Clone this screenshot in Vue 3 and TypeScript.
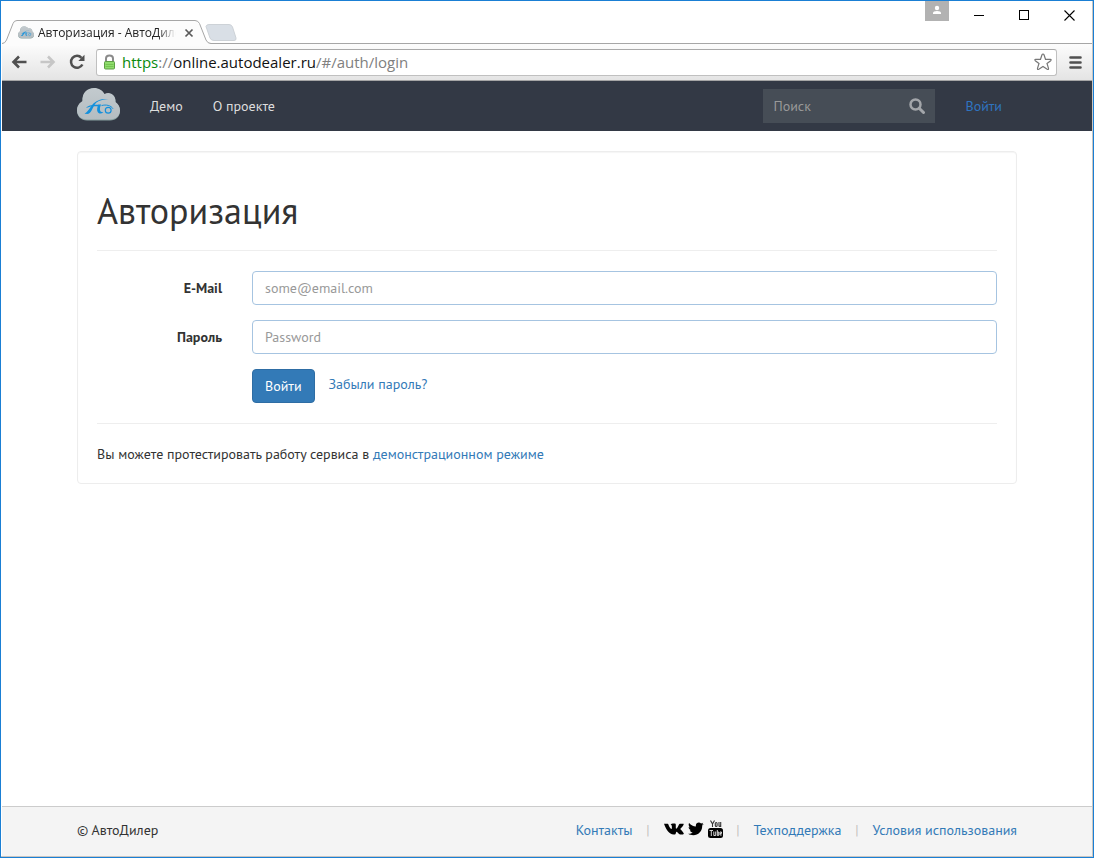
<script setup lang="ts">
import { ref } from 'vue'

interface NavLink {
  label: string
  href: string
}

const navLinks: NavLink[] = [
  { label: 'Демо', href: '#/demo' },
  { label: 'О проекте', href: '#/about' },
]

const query = ref('')
const email = ref('')
const password = ref('')
</script>

<template>
  <div class="window">
    <svg class="symbols" width="0" height="0" aria-hidden="true">
      <defs>
        <linearGradient id="cloud-fill" x1="0" y1="0" x2="0" y2="1">
          <stop offset="0" stop-color="#c3cace" />
          <stop offset="1" stop-color="#b4bdc1" />
        </linearGradient>
        <symbol id="cloud" viewBox="0 0 43 33">
          <path d="M10 32.500C4 32.500 0 28 0 23C0 18 3 15 5.500 13.500C5 5.500 10 .5 17 .5C22 .5 25.500 3 27.500 6.500C33 3.500 39 7.500 38.500 14.500C41.500 16.500 43 19.500 43 23C43 28.500 39 32.500 33 32.500Z" fill="#87a09f" />
          <path d="M10 31.500C4 31.500 0 27.500 0 22.500C0 17.500 3 14.500 5.500 13C5 5 10 0 17 0C22 0 25.500 2.500 27.500 6C33 3 39 7 38.500 14C41.500 16 43 19 43 22.500C43 27.500 39 31.500 33 31.500Z" fill="url(#cloud-fill)" />
          <path d="M7.500 25.800C11 24 12.500 20 15.500 16.500C19 12.500 24 10.500 31.500 11C25 11.500 21 12.800 18.500 15.500C15.500 19 15 24.500 11 26Z" fill="#1390dc" />
          <path d="M9 20C11 17.300 15 16.600 22 16.800L21 18.300C16 18.200 12.500 18.500 9 20Z" fill="#1390dc" />
          <path d="M21.500 16.500C20 19 19.600 22.500 20.800 24.300C22 26 24.500 25.800 26.500 24.300C23.800 24.400 22.800 23 22.900 21C23 19 23.500 17.500 24.300 16.500Z" fill="#1390dc" />
          <path d="M24.500 17.600C29 16.300 34 17.300 36 20.800" fill="none" stroke="#1390dc" />
          <circle cx="31.200" cy="22.300" r="2.900" fill="none" stroke="#1390dc" stroke-width="1.200" />
        </symbol>
      </defs>
    </svg>

    <header class="browser">
      <div class="titlebar">
        <div class="tab">
          <svg class="tab-shape" width="238" height="26" viewBox="0 0 238 26" aria-hidden="true">
            <path d="M204 6.500Q204.500 4.500 207 4.500H227Q229.500 4.500 230.500 7L234 18Q234.500 20.500 232 20.500H212Q209 20.500 208 18Z" fill="#d9dfe6" stroke="#cdd2d7" />
            <path d="M0 25V23.500Q3 23.500 4.500 20L11 3.500Q12 .5 15 .5H193Q196 .5 197.500 3.500L204 20Q205.500 23.500 209 23.500H238V26H0Z" fill="#fcfcfc" />
            <path d="M0 23.500Q3 23.500 4.500 20L11 3.500Q12 .5 15 .5H193Q196 .5 197.500 3.500L204 20Q205.500 23.500 209 23.500H238" fill="none" stroke="#a6a6a6" />
          </svg>
          <svg class="favicon" width="16" height="13" aria-hidden="true"><use href="#cloud" /></svg>
          <span class="tab-title">Авторизация - АвтоДилер</span>
          <button class="plain tab-close" type="button" aria-label="Закрыть вкладку">
            <svg width="10" height="10" viewBox="0 0 10 10"><path d="M1.500 1.500L8.500 8.500M8.500 1.500L1.500 8.500" stroke="#5a5a5a" stroke-width="1.700" /></svg>
          </button>
        </div>
        <div class="controls">
          <button class="plain profile" type="button" aria-label="Профиль">
            <svg width="24" height="20" viewBox="0 0 24 20"><circle cx="12" cy="7" r="2.200" fill="#fff" /><path d="M8 13V12Q8 10 12 10T16 12V13Z" fill="#fff" /></svg>
          </button>
          <button class="plain control" type="button" aria-label="Свернуть">
            <svg width="11" height="11" viewBox="0 0 11 11"><path d="M0 5.500H10" stroke="#000" /></svg>
          </button>
          <button class="plain control" type="button" aria-label="Развернуть">
            <svg width="11" height="11" viewBox="0 0 11 11"><rect x=".5" y=".5" width="9" height="9" fill="none" stroke="#000" /></svg>
          </button>
          <button class="plain control" type="button" aria-label="Закрыть">
            <svg width="11" height="11" viewBox="0 0 11 11"><path d="M.5 .5L10.500 10.500M10.500 .5L.5 10.500" stroke="#000" stroke-width="1.100" /></svg>
          </button>
        </div>
      </div>
      <div class="toolbar">
        <button class="plain tool" type="button" aria-label="Назад">
          <svg width="16" height="14" viewBox="0 0 16 14"><path d="M8 1.500L2.500 7L8 12.500M3 7H15.500" fill="none" stroke="#505050" stroke-width="2.600" /></svg>
        </button>
        <button class="plain tool" type="button" aria-label="Вперёд">
          <svg width="16" height="14" viewBox="0 0 16 14"><path d="M8 1.500L13.500 7L8 12.500M13 7H.5" fill="none" stroke="#c6c6c6" stroke-width="2.600" /></svg>
        </button>
        <button class="plain tool" type="button" aria-label="Обновить">
          <svg width="16" height="16" viewBox="0 0 16 16"><path d="M12.500 3.800A6 6 0 1 0 13.400 10.500" fill="none" stroke="#505050" stroke-width="2.500" /><path d="M15.500 .8V7H9.300Z" fill="#505050" /></svg>
        </button>
        <div class="address">
          <svg width="13" height="16" viewBox="0 0 13 16" aria-hidden="true">
            <path d="M3 8V4.500Q3 1.500 6.500 1.500T10 4.500V8" fill="none" stroke="#8b8b8b" stroke-width="2" />
            <rect x="1.500" y="7.500" width="10" height="7.500" rx="1" fill="#8fdc6c" stroke="#5d9e45" />
            <path d="M2.500 10.500H10.500M2.500 12.500H10.500" stroke="#74c451" />
          </svg>
          <span class="url"><span class="scheme">https</span>://<span class="host">online.autodealer.ru</span>/#/auth/login</span>
          <button class="plain star" type="button" aria-label="Добавить в закладки">
            <svg width="18" height="18" viewBox="0 0 18 18"><path d="M9 1Q9.700 1 10 1.800L11.500 6.300H16.300Q17.800 6.500 16.700 7.700L13 10.500L14.500 15.300Q14.700 17 13.200 16.300L9 13.400L4.800 16.300Q3.300 17 3.500 15.300L5 10.500L1.300 7.700Q.2 6.500 1.700 6.300H6.500L8 1.800Q8.300 1 9 1Z" fill="#fff" stroke="#777" stroke-width="1.200" /></svg>
          </button>
        </div>
        <button class="plain menu" type="button" aria-label="Меню">
          <svg width="13" height="13" viewBox="0 0 13 13"><path d="M1.500 1.500H11.500M1.500 6.500H11.500M1.500 11.500H11.500" stroke="#505050" stroke-width="2.600" stroke-linecap="round" /></svg>
        </button>
      </div>
    </header>

    <nav class="navbar">
      <div class="container bar">
        <a class="brand" href="#/" aria-label="АвтоДилер"><svg width="43" height="33"><use href="#cloud" /></svg></a>
        <a v-for="link in navLinks" :key="link.href" class="nav-link" :href="link.href">{{ link.label }}</a>
        <form class="search" @submit.prevent>
          <input v-model="query" type="text" placeholder="Поиск" aria-label="Поиск" />
          <button class="plain" type="submit" aria-label="Найти">
            <svg width="16" height="16" viewBox="0 0 16 16"><circle cx="6.500" cy="6.500" r="5" fill="none" stroke="#a3a6aa" stroke-width="2.500" /><path d="M10.200 10.200L14.500 14.500" stroke="#a3a6aa" stroke-width="3" stroke-linecap="round" /></svg>
          </button>
        </form>
        <a class="sign-in" href="#/auth/login">Войти</a>
      </div>
    </nav>

    <main class="container">
      <section class="card">
        <h1>Авторизация</h1>
        <hr />
        <form class="login" @submit.prevent>
          <label for="email">E-Mail</label>
          <input id="email" v-model="email" type="email" placeholder="some@email.com" />
          <label for="password">Пароль</label>
          <input id="password" v-model="password" type="password" placeholder="Password" />
          <div class="actions">
            <button type="submit">Войти</button>
            <a href="#/auth/restore">Забыли пароль?</a>
          </div>
        </form>
        <hr />
        <p>Вы можете протестировать работу сервиса в <a href="#/demo">демонстрационном режиме</a></p>
      </section>
    </main>

    <footer class="footer">
      <div class="container bar">
        <span class="copyright">© АвтоДилер</span>
        <a href="#/contacts">Контакты</a>
        <span class="divider">|</span>
        <span class="social">
          <a href="#vk" aria-label="ВКонтакте">
            <svg width="20" height="12" viewBox="0 0 20 12"><path d="M0 .8H3.600Q4.200 .8 4.400 1.500C5.200 3.800 6.500 6 7.300 6C7.800 6 7.900 5.300 7.900 4.500C7.900 2.500 7.700 1.800 6.600 1.400C7.300 .3 10.800 .1 11.500 .8C12.200 1.500 11.400 5.700 12.200 5.700C13 5.700 14.300 3 15 1.400Q15.300 .8 16 .8H19.300C20.500 .9 18.800 3.300 16.200 6C17.400 7.300 19.400 9.300 19.800 10.500C20 11.300 19 11.400 18.300 11.400H16C15 11.400 13.500 9 12.600 8.700C11.700 8.400 12.200 11.400 11 11.400C5.300 12.300 2.500 7.200 0 .8Z" fill="#000" /></svg>
          </a>
          <a href="#twitter" aria-label="Twitter">
            <svg width="16" height="14" viewBox="0 0 16 14"><path d="M15.800 2L14.200 3.600C14.400 9 10.500 13.200 5.300 13.200C3.300 13.200 1.600 12.800 .2 11.800C2 11.900 3.600 11.400 4.700 10.500C3.100 10.300 2.200 9.500 1.800 8.300H3.200C1.500 7.700 .6 6.600 .7 5L2 5.400C.6 4.200 .3 2.600 1.100 1C3 3.200 5.200 4.200 7.900 4.500C7.300 1.200 10.800-.6 13.100 1.500L15.200 .8L14 2.400Z" fill="#000" /></svg>
          </a>
          <a href="#youtube" aria-label="YouTube">
            <svg width="15" height="18" viewBox="0 0 15 18">
              <path d="M2.500 .5L4.500 4V7M6.500 .5L4.500 4M7.300 3.500V5.500Q7.300 6.500 8.200 6.500T9.100 5.500V3.500Q9.100 2.500 8.200 2.500T7.300 3.500M11 2V5.800Q11.300 7.100 12.700 5.500V2V7" fill="none" stroke="#333" stroke-width="1.100" />
              <rect x="0" y="8" width="15" height="10" rx="2.500" fill="#000" />
              <path d="M1.500 10.500H5M3.300 10.500V16M5.800 11.500V15.500H7.700V11.500M9.300 10V15.500H10.700V12H9.300M13.700 15H12V12H13.500V13.500H12" fill="none" stroke="#d5d5d5" />
            </svg>
          </a>
        </span>
        <span class="divider">|</span>
        <a href="#/support">Техподдержка</a>
        <span class="divider">|</span>
        <a href="#/terms">Условия использования</a>
      </div>
    </footer>
  </div>
</template>

<style>
body {
  margin: 0;
}
</style>

<style scoped>
* {
  box-sizing: border-box;
}

.window {
  display: flex;
  flex-direction: column;
  min-height: 100vh;
  padding: 0 1px 1px;
  border: 1px solid #1a7fd4;
  background: #fff;
  box-shadow: inset -1px -1px #c9c5c1;
  color: #333;
  font: 14px/20px "PT Sans", "Noto Sans", sans-serif;
}

svg {
  display: block;
}

.symbols {
  position: absolute;
}

a {
  color: #337ab7;
  text-decoration: none;
}

input,
button {
  font: inherit;
}

.plain {
  display: flex;
  align-items: center;
  justify-content: center;
  padding: 0;
  border: 0;
  background: none;
}

.container {
  width: calc(100% - 150px);
  max-width: 1140px;
  margin: 0 auto;
}

.bar {
  display: flex;
  align-items: center;
}

.browser {
  font-family: "Segoe UI", "Open Sans", sans-serif;
}

.titlebar {
  display: flex;
  justify-content: space-between;
  height: 43px;
  border-bottom: 1px solid #a6a6a6;
}

.tab {
  position: relative;
  display: flex;
  align-items: center;
  gap: 4px;
  width: 204px;
  height: 24px;
  margin-top: 19px;
  padding-left: 16px;
}

.tab-shape {
  position: absolute;
  top: 0;
  left: 0;
}

.favicon,
.tab-title,
.tab-close {
  position: relative;
}

.tab-title {
  width: 138px;
  padding-top: 2px;
  overflow: hidden;
  color: #222;
  font-size: 12px;
  white-space: nowrap;
  mask-image: linear-gradient(to right, #000 120px, transparent);
}

.tab-close {
  margin-top: 2px;
  margin-left: 4px;
}

.controls {
  display: flex;
}

.profile {
  width: 24px;
  height: 20px;
  margin-right: 8px;
  background: #b2b2b2;
}

.control {
  width: 45px;
  height: 28px;
}

.toolbar {
  display: flex;
  align-items: center;
  height: 37px;
  padding-right: 10px;
  padding-left: 2px;
  border-bottom: 1px solid #a6a6a6;
  background: linear-gradient(#fcfcfc, #e4e4e4);
}

.tool {
  width: 29px;
  height: 28px;
}

.address {
  display: flex;
  flex: 1;
  align-items: center;
  gap: 6px;
  height: 27px;
  margin-left: 5px;
  padding: 0 4px 0 6px;
  border: 1px solid #c0c0c0;
  border-top-color: #a9a9a9;
  border-radius: 3px;
  background: #fff;
}

.url {
  flex: 1;
  color: #808080;
  font-size: 15px;
}

.scheme {
  color: #098a0d;
}

.host {
  color: #111;
}

.menu {
  margin-left: 12px;
}

.navbar {
  background: #333945;
}

.navbar .bar {
  height: 50px;
}

.brand {
  margin-right: 30px;
  padding-bottom: 4px;
}

.nav-link {
  margin-right: 30px;
  color: #ddd;
}

.search {
  display: flex;
  align-items: center;
  width: 172px;
  height: 34px;
  margin-left: auto;
  padding-right: 10px;
  background: #464d56;
}

.search input {
  flex: 1;
  min-width: 0;
  padding: 0 10px;
  border: 0;
  background: none;
  color: #ddd;
}

.search input::placeholder {
  color: #999;
}

.sign-in {
  margin: 0 15px 0 30px;
  color: #2f74c0;
}

main {
  flex: 1;
  padding: 20px 0;
}

.card {
  padding: 19px;
  border: 1px solid #ededed;
  border-radius: 4px;
  box-shadow: inset 0 1px 1px rgba(0, 0, 0, 0.04);
}

h1 {
  margin: 20px 0 0;
  font-size: 36px;
  font-weight: 400;
  line-height: 39px;
}

hr {
  margin: 20px 0;
  border: 0;
  border-top: 1px solid #eee;
}

.login {
  display: grid;
  grid-template-columns: 125px 1fr;
  gap: 15px 30px;
  align-items: center;
}

.login label {
  font-weight: 700;
  text-align: right;
}

.login input {
  width: 100%;
  height: 34px;
  padding: 0 12px;
  border: 1px solid #a6c4e1;
  border-radius: 4px;
  background: #fff;
  color: #555;
}

.login input::placeholder {
  color: #999;
}

.actions {
  display: flex;
  grid-column: 2;
  gap: 14px;
}

.actions button {
  height: 34px;
  padding: 0 12px;
  border: 1px solid #2e6da4;
  border-radius: 4px;
  background: #337ab7;
  color: #fff;
}

.actions a {
  line-height: 30px;
}

p {
  margin: 0;
}

.footer {
  border-top: 1px solid #ccc;
  background: #f4f4f4;
}

.footer .bar {
  height: 49px;
  padding-bottom: 3px;
}

.copyright {
  margin-right: auto;
}

.divider {
  width: 31px;
  color: #c5c0bd;
  text-align: center;
}

.social {
  display: flex;
  align-items: center;
  gap: 4px;
  padding-bottom: 2px;
}
</style>
